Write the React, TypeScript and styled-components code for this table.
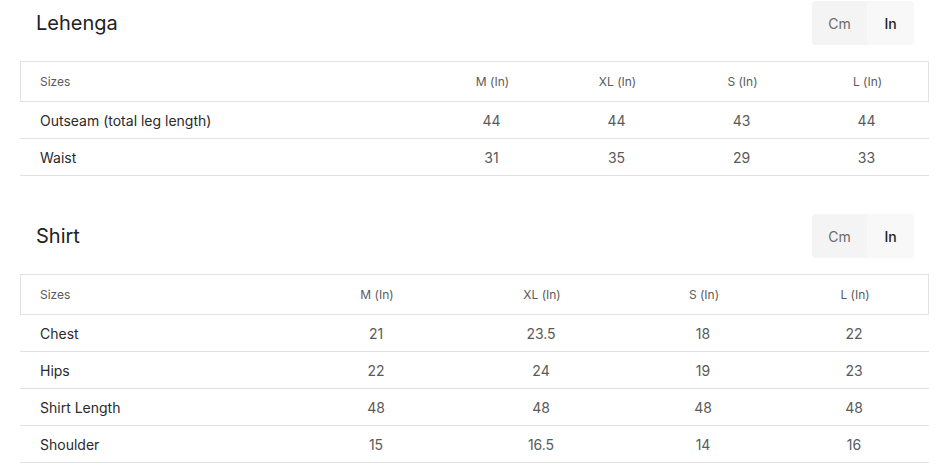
import React from "react";
import styled, { createGlobalStyle } from "styled-components";

const Global = createGlobalStyle`
  html, body { margin: 0; padding: 0; background: #fff; }
  body { font-family: Inter, "Noto Sans", sans-serif; -webkit-font-smoothing: antialiased; }
  * { box-sizing: border-box; }
`;

const Page = styled.div`
  padding: 1px 15px 0 20px;
  width: 944px;
`;

const Section = styled.section`
  & + & { margin-top: 38px; }
`;

const SectionHeader = styled.div`
  display: flex;
  align-items: center;
  justify-content: space-between;
  height: 44px;
  padding-left: 16px;
  padding-right: 15px;
  margin-bottom: 16px;
`;

const Title = styled.h2`
  margin: 0;
  font-size: 20px;
  font-weight: 400;
  color: #222;
  letter-spacing: 0;
`;

const Toggle = styled.div`
  display: flex;
  height: 44px;
  border-radius: 4px;
  overflow: hidden;
  background: #f4f4f4;
`;

const ToggleBtn = styled.button<{ $active?: boolean }>`
  border: 0;
  margin: 0;
  padding: 0;
  width: ${(p) => (p.$active ? "47px" : "55px")};
  font-family: Inter, sans-serif;
  font-size: 14px;
  font-weight: ${(p) => (p.$active ? 500 : 400)};
  color: ${(p) => (p.$active ? "#222" : "#6b6b6b")};
  background: ${(p) => (p.$active ? "#f8f8f8" : "#f4f4f4")};
  border-radius: ${(p) => (p.$active ? "4px" : "0")};
  text-align: center;
  cursor: pointer;
`;

const Table = styled.div`
  width: 909px;
`;

const Row = styled.div<{ $cols: string; $head?: boolean }>`
  display: grid;
  grid-template-columns: ${(p) => p.$cols};
  align-items: center;
  height: ${(p) => (p.$head ? "41px" : "37px")};
  border-bottom: 1px solid #e2e2e2;
  ${(p) =>
    p.$head
      ? `border-top: 1px solid #e2e2e2; border-left: 1px solid #e2e2e2; border-right: 1px solid #e2e2e2;`
      : ""}
`;

const HeadCell = styled.div<{ $first?: boolean }>`
  font-size: 12px;
  color: #5a5a5a;
  text-align: ${(p) => (p.$first ? "left" : "center")};
  padding-left: ${(p) => (p.$first ? "19px" : "0")};
`;

const Label = styled.div`
  font-size: 14px;
  color: #2a2a2a;
  padding-left: 20px;
`;

const Value = styled.div`
  font-size: 14px;
  color: #5a5a5a;
  text-align: center;
`;

type Chart = {
  title: string;
  cols: string;
  sizes: string[];
  rows: { label: string; values: string[] }[];
};

const charts: Chart[] = [
  {
    title: "Lehenga",
    cols: "409px 125px 125px 125px 125px",
    sizes: ["M (In)", "XL (In)", "S (In)", "L (In)"],
    rows: [
      { label: "Outseam (total leg length)", values: ["44", "44", "43", "44"] },
      { label: "Waist", values: ["31", "35", "29", "33"] },
    ],
  },
  {
    title: "Shirt",
    cols: "277px 158px 172px 152px 150px",
    sizes: ["M (In)", "XL (In)", "S (In)", "L (In)"],
    rows: [
      { label: "Chest", values: ["21", "23.5", "18", "22"] },
      { label: "Hips", values: ["22", "24", "19", "23"] },
      { label: "Shirt Length", values: ["48", "48", "48", "48"] },
      { label: "Shoulder", values: ["15", "16.5", "14", "16"] },
    ],
  },
];

export default function App() {
  return (
    <>
      <Global />
      <Page>
        {charts.map((c) => (
          <Section key={c.title}>
            <SectionHeader>
              <Title>{c.title}</Title>
              <Toggle>
                <ToggleBtn>Cm</ToggleBtn>
                <ToggleBtn $active>In</ToggleBtn>
              </Toggle>
            </SectionHeader>
            <Table>
              <Row $cols={c.cols} $head>
                <HeadCell $first>Sizes</HeadCell>
                {c.sizes.map((s) => (
                  <HeadCell key={s}>{s}</HeadCell>
                ))}
              </Row>
              {c.rows.map((r) => (
                <Row $cols={c.cols} key={r.label}>
                  <Label>{r.label}</Label>
                  {r.values.map((v, i) => (
                    <Value key={i}>{v}</Value>
                  ))}
                </Row>
              ))}
            </Table>
          </Section>
        ))}
      </Page>
    </>
  );
}
